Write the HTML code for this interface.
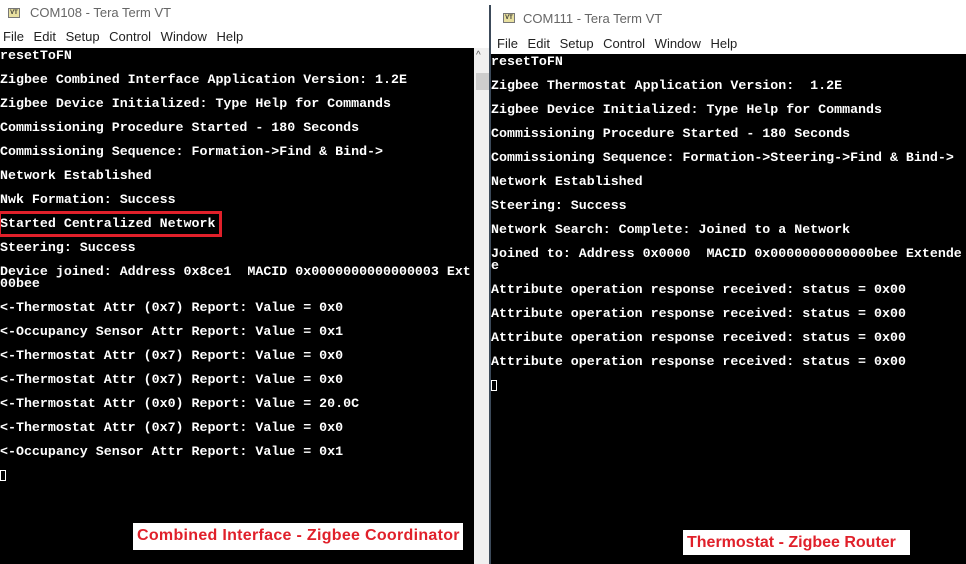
<!DOCTYPE html>
<html><head><meta charset="utf-8"><style>
*{margin:0;padding:0;box-sizing:border-box}
body{width:966px;height:564px;overflow:hidden;background:#fff;position:relative;font-family:"Liberation Sans",sans-serif}
.abs{position:absolute}
.term{position:absolute;background:#000;color:#fff;font-family:"Liberation Mono",monospace;font-weight:bold;font-size:13.3px;line-height:12px;white-space:pre;overflow:hidden}
.title{position:absolute;font-size:13px;color:#666}
.menu{position:absolute;font-size:13px;color:#222;word-spacing:6px}
.icon{position:absolute;width:12px;height:10px;border:1px solid #777;background:#e8e0a0;font-size:6px;line-height:8px;text-align:center;color:#333;font-weight:bold}
.lbl{position:absolute;background:#fff;color:#e0202a;font-weight:bold;font-size:16px;padding:2px 4px;line-height:22px}
</style></head><body>
<div class="icon" style="left:8px;top:8px">VT</div>
<div class="title" style="left:30px;top:5px">COM108 - Tera Term VT</div>
<div class="menu" style="left:3px;top:29px">File Edit Setup Control Window Help</div>
<div class="term" style="left:0;top:48px;width:474px;height:516px;padding:2px 0 0 0">resetToFN

Zigbee Combined Interface Application Version: 1.2E

Zigbee Device Initialized: Type Help for Commands

Commissioning Procedure Started - 180 Seconds

Commissioning Sequence: Formation-&gt;Find &amp; Bind-&gt;

Network Established

Nwk Formation: Success

Started Centralized Network

Steering: Success

Device joined: Address 0x8ce1  MACID 0x0000000000000003 Ext
00bee

&lt;-Thermostat Attr (0x7) Report: Value = 0x0

&lt;-Occupancy Sensor Attr Report: Value = 0x1

&lt;-Thermostat Attr (0x7) Report: Value = 0x0

&lt;-Thermostat Attr (0x7) Report: Value = 0x0

&lt;-Thermostat Attr (0x0) Report: Value = 20.0C

&lt;-Thermostat Attr (0x7) Report: Value = 0x0

&lt;-Occupancy Sensor Attr Report: Value = 0x1

<span style="display:inline-block;width:6px;height:11px;border:1px solid #fff"></span></div>
<div class="abs" style="left:-2px;top:211px;width:224px;height:26px;border:3px solid #e0202a"></div>
<div class="abs" style="left:474px;top:48px;width:16px;height:516px;background:#f0f0f0"></div>
<div class="abs" style="left:476px;top:50px;font-size:10px;color:#555">^</div>
<div class="abs" style="left:476px;top:73px;width:13px;height:17px;background:#cdcdcd"></div>
<div class="abs" style="left:489px;top:5px;width:2px;height:559px;background:#3c4a5a"></div>
<div class="icon" style="left:503px;top:13px">VT</div>
<div class="title" style="left:523px;top:11px">COM111 - Tera Term VT</div>
<div class="menu" style="left:497px;top:36px">File Edit Setup Control Window Help</div>
<div class="term" style="left:491px;top:54px;width:475px;height:510px;padding-top:2px">resetToFN

Zigbee Thermostat Application Version:  1.2E

Zigbee Device Initialized: Type Help for Commands

Commissioning Procedure Started - 180 Seconds

Commissioning Sequence: Formation-&gt;Steering-&gt;Find &amp; Bind-&gt;

Network Established

Steering: Success

Network Search: Complete: Joined to a Network

Joined to: Address 0x0000  MACID 0x0000000000000bee Extende
e

Attribute operation response received: status = 0x00

Attribute operation response received: status = 0x00

Attribute operation response received: status = 0x00

Attribute operation response received: status = 0x00

<span style="display:inline-block;width:6px;height:11px;border:1px solid #fff"></span></div>
<div class="lbl" style="left:133px;top:523px;width:330px;height:27px;white-space:nowrap;letter-spacing:0.3px">Combined Interface - Zigbee Coordinator</div>
<div class="lbl" style="left:683px;top:530px;width:227px;height:25px;white-space:nowrap">Thermostat - Zigbee Router</div>
</body></html>
